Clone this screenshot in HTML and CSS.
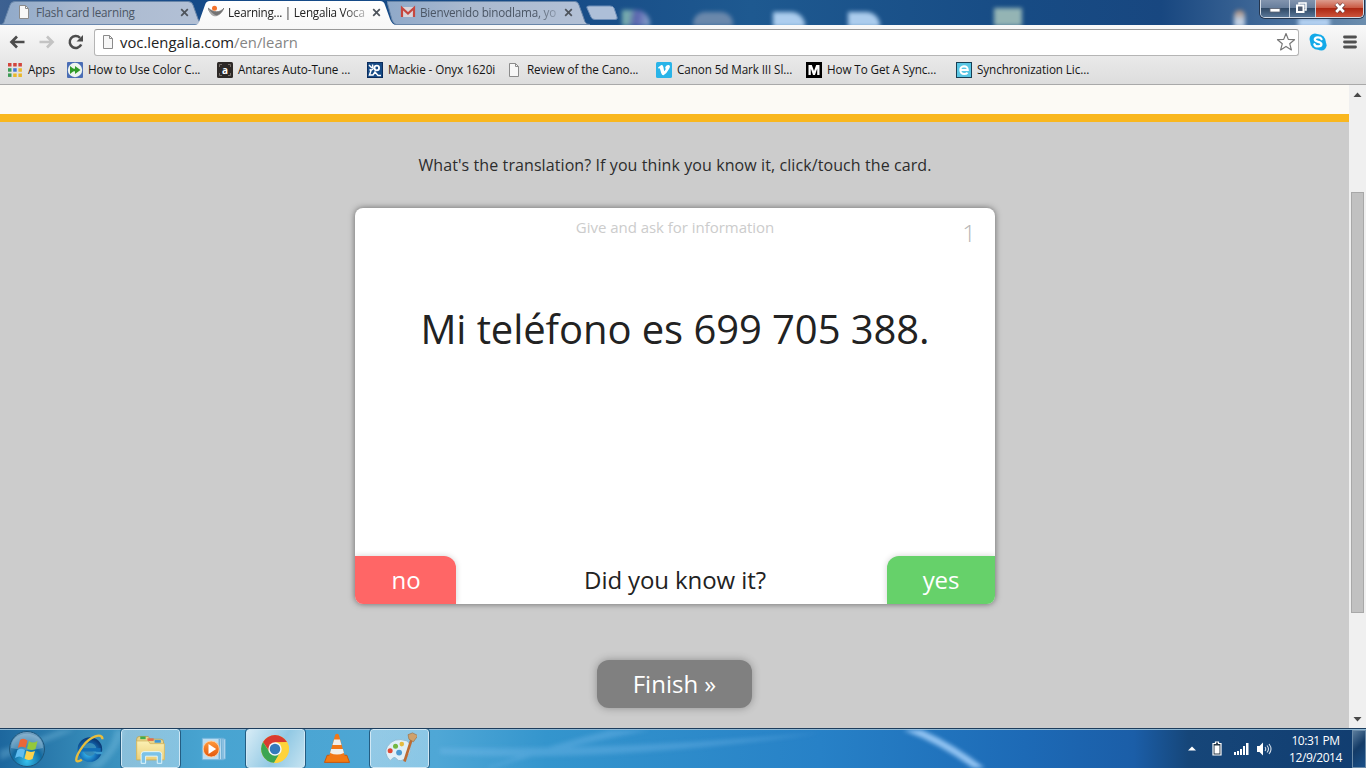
FILE: index.html
```html
<!DOCTYPE html>
<html lang="en">
<head>
<meta charset="utf-8">
<title>Learning... | Lengalia Vocabulary</title>
<link rel="stylesheet" href="styles.css">
</head>
<body>
<svg class="defs" width="0" height="0">
  <defs>
    <linearGradient id="tabIdle" x1="0" x2="1" y1="0" y2="0"><stop offset="0" stop-color="#8fa9c9"/><stop offset=".4" stop-color="#aab9cf"/><stop offset="1" stop-color="#b3c1d6"/></linearGradient>
    <linearGradient id="tabOn" x1="0" x2="0" y1="0" y2="1"><stop offset="0" stop-color="#fff"/><stop offset="1" stop-color="#f8f8f8"/></linearGradient>
    <linearGradient id="orange" x1="0" x2="0" y1="0" y2="1"><stop offset="0" stop-color="#ff9a3c"/><stop offset="1" stop-color="#e2570c"/></linearGradient>
    <radialGradient id="orb" cx=".5" cy=".85" r=".85"><stop offset="0" stop-color="#35c1ee"/><stop offset=".5" stop-color="#12699f"/><stop offset="1" stop-color="#7ba5c4"/></radialGradient>
    <linearGradient id="folder" x1="0" x2="0" y1="0" y2="1"><stop offset="0" stop-color="#fbf0b4"/><stop offset="1" stop-color="#ecd079"/></linearGradient>
    <radialGradient id="ie" cx=".4" cy=".7" r=".8"><stop offset="0" stop-color="#3fc4f4"/><stop offset=".6" stop-color="#1169b4"/><stop offset="1" stop-color="#0b3c78"/></radialGradient>
    <symbol id="doc" viewBox="0 0 16 16"><path d="M3.500 1.500h6l3 3v10h-9z" fill="#f7f7f7" stroke="#8b8b8b"/><path d="M9.500 1.500v3h3" fill="none" stroke="#8b8b8b"/></symbol>
    <symbol id="close" viewBox="0 0 9 9"><path d="M1.200 1.200l6.600 6.600M7.800 1.200L1.200 7.800" stroke="#4d535b" stroke-width="1.700"/></symbol>
  </defs>
</svg>
<div class="window">
  <header class="frame">
    <div class="desktop-blur"><i class="b1"></i><i class="b2"></i><i class="b3"></i><i class="b4"></i><i class="b5"></i><i class="b6"></i><i class="b7"></i></div>
    <div class="tab">
      <svg class="tab-shape" viewBox="0 0 206 25"><path d="M0 24.500C4 24.500 4 22 5 19L10 5Q11 1.500 15 1.500H188Q192 1.500 193 5L198 19Q200 24.500 205 24.500" fill="url(#tabIdle)" stroke="#6885a8"/></svg>
      <svg class="fav" viewBox="0 0 16 16"><use href="#doc"/></svg>
      <span class="tab-title">Flash card learning</span>
      <svg class="tab-close"><use href="#close"/></svg>
    </div>
    <div class="tab active">
      <svg class="tab-shape" viewBox="0 0 206 25"><path d="M0 25C4 24.500 4 22 5 19L10 5Q11 1 15 1H185Q189 1 190 5L195 19Q197 24.500 201 25" fill="url(#tabOn)"/></svg>
      <svg class="fav" viewBox="0 0 16 16"><path d="M0 4C3 13 11 15 16 4C12 9 6 9 0 4z" fill="#737373" stroke="#737373" stroke-width=".8"/><path d="M0 4C2 11 5 13 9 12C5 10 3 8 0 4z" fill="#a7a7a7"/><circle cx="6.500" cy="4.300" r="2.500" fill="#f4732c"/></svg>
      <span class="tab-title">Learning... | Lengalia Voca</span>
      <svg class="tab-close"><use href="#close"/></svg>
    </div>
    <div class="tab gmail">
      <svg class="tab-shape" viewBox="0 0 206 25"><path d="M0 1.500H188Q191 1.500 192 5L197 19Q198 24.500 203 24.500H9Q6 23 5 20z" fill="url(#tabIdle)" stroke="#6885a8"/></svg>
      <svg class="fav" viewBox="0 0 16 16"><rect x="1.500" y="3" width="13" height="10" fill="#d9d5db"/><path d="M2 13V4l6 5.500L14 4v9" fill="none" stroke="#c6473f" stroke-width="2.200"/></svg>
      <span class="tab-title">Bienvenido binodlama, yo</span>
      <svg class="tab-close"><use href="#close"/></svg>
    </div>
    <svg class="newtab" viewBox="0 0 34 16"><path d="M2 3Q1 1 4 1H25Q28 1 29 3L32 12Q33 14.500 30 14.500H10Q7 14.500 6 12z" fill="#adbfd8" stroke="#6f8fb8"/></svg>
    <div class="controls">
      <div class="ctl min"><svg viewBox="0 0 14 12"><rect x="2" y="6.500" width="10" height="3.500" fill="#fff" stroke="#5b6270" stroke-width=".8"/></svg></div>
      <div class="ctl max"><svg viewBox="0 0 14 12"><path d="M5 2.500V1h7v7h-1.500" fill="none" stroke="#fff" stroke-width="1.500"/><rect x="3" y="3.500" width="6.500" height="6.500" fill="#4f5b70" stroke="#fff" stroke-width="2"/></svg></div>
      <div class="ctl shut"><svg viewBox="0 0 14 12"><path d="M3 2l8 8M11 2L3 10" stroke="#6b3b38" stroke-width="4.200"/><path d="M3.200 2l7.600 8M10.800 2L3.200 10" stroke="#fff" stroke-width="2.700"/></svg></div>
    </div>
  </header>
  <nav class="toolbar">
    <svg class="back" viewBox="0 0 16 16"><path d="M15.500 8H3M8 2.500L2.500 8L8 13.500" fill="none" stroke="#4c4c4c" stroke-width="2.700"/></svg>
    <svg class="forward" viewBox="0 0 16 16"><path d="M.5 8H13M8 2.500L13.500 8L8 13.500" fill="none" stroke="#c3c3c3" stroke-width="2.700"/></svg>
    <svg class="reload" viewBox="0 0 16 16"><path d="M13.200 10.500A6 6 0 1 1 12 3.800" fill="none" stroke="#4c4c4c" stroke-width="2.500"/><path d="M15 1v6.500H8.500z" fill="#4c4c4c"/></svg>
    <div class="omnibox">
      <svg class="fav" viewBox="0 0 16 16"><use href="#doc"/></svg>
      <span class="url">voc.lengalia.com<span class="path">/en/learn</span></span>
      <svg class="star" viewBox="0 0 20 20"><path d="M10 1.500l2.300 5.900 6.200.3-4.800 4 1.700 6.200L10 14.400l-5.400 3.500 1.700-6.200-4.800-4 6.200-.3z" fill="#fff" stroke="#777" stroke-width="1.200" stroke-linejoin="round"/></svg>
    </div>
    <svg class="skype" viewBox="0 0 18 18"><circle cx="6" cy="6" r="5.500" fill="#13a9e8"/><circle cx="12.300" cy="12.300" r="5.300" fill="#13a9e8"/><circle cx="9" cy="9" r="7.800" fill="#13a9e8"/><path d="M12.500 6.100C11.500 3.800 5.800 3.800 5.800 6.600C5.800 9.500 12.400 8.200 12.400 11.200C12.400 14 6.200 14 5.400 11.300" fill="none" stroke="#fff" stroke-width="2.300" stroke-linecap="round"/></svg>
    <svg class="menu" viewBox="0 0 14 14"><path d="M1.500 2h11M1.500 7h11M1.500 12h11" stroke="#505050" stroke-width="2.800" stroke-linecap="round"/></svg>
  </nav>
  <nav class="bookmarks">
    <a class="bm apps"><svg viewBox="0 0 16 16"><path d="M1 1h3.500v3.500H1zM6.200 1h3.500v3.500H6.200zM11.400 1h3.500v3.500h-3.500z" fill="#d2453c"/><path d="M1 6.200h3.500v3.500H1z" fill="#3d9b55"/><path d="M6.200 6.200h3.500v3.500H6.200z" fill="#4274d3"/><path d="M11.400 6.200h3.500v3.500h-3.500zM6.200 11.400h3.500v3.500H6.200zM11.400 11.400h3.500v3.500h-3.500z" fill="#e9b82b"/><path d="M1 11.400h3.500v3.500H1z" fill="#3d9b55"/></svg><span>Apps</span></a>
    <a class="bm"><svg viewBox="0 0 16 16"><rect width="16" height="16" rx="1" fill="#4a6db5"/><circle cx="8" cy="8" r="7.200" fill="#eef5ee"/><path d="M3 4l5 4-5 4zM8 4l5.500 4L8 12z" fill="#319b28"/><path d="M3 6.700h6v2.600H3z" fill="#319b28"/></svg><span>How to Use Color C...</span></a>
    <a class="bm"><svg viewBox="0 0 16 16"><rect width="16" height="16" rx="1.500" fill="#2d2927"/><path d="M2.500 5V2.500H5M11 2.500h2.500V5M2.500 11v2.500H5M11 13.500h2.500V11" fill="none" stroke="#77706b"/><text x="8" y="11.500" class="glyph-a">a</text></svg><span>Antares Auto-Tune ...</span></a>
    <a class="bm mackie"><svg viewBox="0 0 16 16"><rect width="16" height="16" fill="#164a85" stroke="#0b2c5c" stroke-width="2"/><path d="M2 3l3 3M2.500 7.500Q5 9 6.500 6M4 8.500L2.500 13H6L8 10l3 3.500h3M6 6L5.500 2.500" fill="none" stroke="#fff" stroke-width="1.500"/><circle cx="9.800" cy="6" r="2.300" fill="none" stroke="#fff" stroke-width="1.800"/></svg><span>Mackie - Onyx 1620i</span></a>
    <a class="bm"><svg viewBox="0 0 16 16"><use href="#doc"/></svg><span>Review of the Cano...</span></a>
    <a class="bm"><svg viewBox="0 0 16 16"><rect width="16" height="16" rx="1.500" fill="#29b4e8"/><path d="M2 5.500L5.300 3Q7 2.700 7.400 5L8.200 9.300Q11 6 9 6.200Q10 2.700 12.700 3Q15 3.600 13 7Q11 11 7.500 13.300Q6 13.600 5.200 11L3.800 6.300L2.800 6.700z" fill="#fff"/></svg><span>Canon 5d Mark III Sl...</span></a>
    <a class="bm"><svg viewBox="0 0 16 16"><rect width="16" height="16" fill="#000"/><path d="M2.500 13V3h3.300L8 9l2.200-6h3.300v10h-2.300V6.500L9 13H7L4.800 6.500V13z" fill="#fff"/></svg><span>How To Get A Sync...</span></a>
    <a class="bm"><svg viewBox="0 0 16 16"><rect width="16" height="16" fill="#173f54"/><rect x="1" y="1" width="14" height="14" fill="#58c6e4"/><path d="M4.500 8h7.300Q11.600 4.200 8 4.200Q4.300 4.500 4.300 8Q4.500 12 8.200 12Q10.300 12 11.600 10.700" fill="none" stroke="#fff" stroke-width="2"/></svg><span>Synchronization Lic...</span></a>
  </nav>
  <main class="viewport">
    <div class="page">
      <div class="site-head"></div>
      <section class="learn">
        <p class="prompt">What's the translation? If you think you know it, click/touch the card.</p>
        <article class="card">
          <div class="card-head"><span class="topic">Give and ask for information</span><span class="count">1</span></div>
          <h1 class="phrase">Mi teléfono es 699 705 388.</h1>
          <div class="answer"><button class="no">no</button><span class="question">Did you know it?</span><button class="yes">yes</button></div>
        </article>
        <button class="finish">Finish »</button>
      </section>
    </div>
    <aside class="scrollbar"><svg viewBox="0 0 9 5"><path d="M.5 5L4.500.5L8.500 5z" fill="#4a4a4a"/></svg><div class="thumb"></div><svg viewBox="0 0 9 5"><path d="M.5 0L4.500 4.500L8.500 0z" fill="#4a4a4a"/></svg></aside>
  </main>
  <footer class="taskbar">
    <svg class="streaks" viewBox="0 0 1366 38" preserveAspectRatio="none">
      <path d="M0 30Q40 15 75 0H60Q20 15 0 20zM100 38Q120 20 125 0H115Q110 25 85 38z" fill="#8acbe9" opacity=".3"/>
      <path d="M490 38Q570 15 650 0H610Q550 15 485 38zM440 24Q600 34 820 3Q620 20 440 18z" fill="#84c2ef" opacity=".32"/>
      <path d="M905 -3Q946 12 984 42" fill="none" stroke="#a0cdf8" stroke-width="7" opacity=".9"/>
    </svg>
    <div class="tasks">
      <div class="task start"><svg viewBox="0 0 38 38"><circle cx="19" cy="19" r="17.500" fill="url(#orb)" stroke="#1d567c"/><path d="M3 18C3-1 35-1 35 18Q20 22 3 18z" fill="#d5e8f3" opacity=".28"/><path d="M12 10Q15.500 7.500 19.500 10.500L17.500 18Q14 15.500 9.800 18z" fill="#ec6638"/><path d="M21 11Q25 14 29.500 11L27.500 19Q23 21 19 18.500z" fill="#94c83c"/><path d="M9.400 20Q13 17.500 17 20L15 28Q11.500 25 7 28z" fill="#60bdf0"/><path d="M18.500 20.500Q22 23 27 21L24.500 29Q20 31 16.500 28.500z" fill="#fdd34c"/></svg></div>
      <div class="task"><svg viewBox="0 0 38 38"><circle cx="20" cy="19.500" r="10.500" fill="none" stroke="url(#ie)" stroke-width="6.500"/><path d="M10 18h22v3.800H10z" fill="#126eb6"/><path d="M23 22h11v3h-6z" fill="#3b9bd0"/><path d="M34 8C34 0 20 5 12 16C2 30 3 36 11 31" fill="none" stroke="#e8be3e" stroke-width="2.600"/></svg></div>
      <div class="task open"><svg viewBox="0 0 38 38"><path d="M3 8q0-3 3-3h10l2 3h12q3 0 3 3v20H3z" fill="#e9d58b" stroke="#b9a45d"/><path d="M7 5h6v3H7z" fill="#40ac4d"/><path d="M15 7h7v3h-7z" fill="#e46d4b"/><path d="M23 9h7v3h-7z" fill="#4097d4"/><path d="M3 10h13l2 3h16v18H3z" fill="url(#folder)" stroke="#d6ba63"/><path d="M8 35V25q0-3 3-3h17q3 0 3 3v10h-5v-8H13v8z" fill="#7cc3e8" stroke="#e9faff"/></svg></div>
      <div class="task"><svg viewBox="0 0 38 38"><path d="M7 7h24v24H7zM28 7l5 1v22l-4 1z" fill="#bcddf1" stroke="#6eb1da"/><path d="M26 7.500v23M29 7.500v23" stroke="#70aed4" stroke-width="1.500"/><circle cx="17" cy="19" r="9" fill="url(#orange)" stroke="#ffd3a8"/><path d="M14 13.500l8.500 5.500-8.500 5.500z" fill="#fff"/></svg></div>
      <div class="task open focus"><svg viewBox="0 0 38 38"><circle cx="19" cy="19" r="15.500" fill="#ffd33b"/><path d="M5.600 11.200A15.500 15.500 0 0 1 32.400 11.200L19 12L13 22z" fill="#d93a30"/><path d="M5.600 11.200A15.500 15.500 0 0 0 18 34.500L25 22.500H13z" fill="#3ba552"/><path d="M19 11.500h13.600A15.500 15.500 0 0 1 18 34.500l7-12z" fill="#ffd33b"/><circle cx="19" cy="19" r="7.500" fill="#f5f7f9"/><circle cx="19" cy="19" r="5.900" fill="#337abc"/></svg></div>
      <div class="task"><svg viewBox="0 0 38 38"><path d="M8 26h22l3 8H5z" fill="#f27a12" stroke="#c75307"/><path d="M17 3q2-2 4 0l7 25q-9 5-18 0z" fill="#f27817"/><path d="M15.800 8.500h6.500l1.700 6H14zM12.500 19h13l1.300 4.500Q19 27 11.300 23.500z" fill="#f1f0ed"/></svg></div>
      <div class="task open"><svg viewBox="0 0 38 38"><path d="M8 32Q0 24 5 16Q12 5 27 10Q35 17 27 28Q19 35 15 30Q13 26 8 32z" fill="#e0f0f8" stroke="#8dbad3"/><circle cx="8" cy="21" r="2.800" fill="#e04a35"/><circle cx="14" cy="16" r="2.800" fill="#73b842"/><circle cx="21" cy="13.500" r="2.600" fill="#e4bb40"/><circle cx="18" cy="23" r="3.300" fill="#4c9bd1"/><path d="M32 8L24 33" stroke="#bd6b32" stroke-width="3"/><path d="M29 8l-1-5 5-2 6 3-5 7z" fill="#cfa16b" stroke="#9b6b3c" stroke-width=".7"/></svg></div>
    </div>
    <div class="tray">
      <svg class="up" viewBox="0 0 8 5"><path d="M0 4.500L4 .5L8 4.500z" fill="#fff"/></svg>
      <svg class="battery" viewBox="0 0 10 15"><path d="M1 2.500h2.500V1h3v1.500H9v11.500H1z" fill="#263746" stroke="#fff" stroke-width="1.200"/><path d="M2.500 4.500h5v8h-5z" fill="#fff"/></svg>
      <svg class="signal" viewBox="0 0 15 12"><path d="M0 9h2v3H0zM3 8h2v4H3zM6 6h2v6H6zM9 3h2v9H9zM12 0h2.500v12H12z" fill="#fff"/></svg>
      <svg class="volume" viewBox="0 0 15 14"><path d="M0 4h2.500L6 .5v13L2.500 10H0z" fill="#fff"/><path d="M8 5q1.500 2 0 4M10 3.500q3 3.500 0 7M12 2q4 5 0 10" fill="none" stroke="#d5dfea" stroke-width="1.100"/></svg>
      <div class="clock"><span>10:31 PM</span><span>12/9/2014</span></div>
      <div class="show-desktop"></div>
    </div>
  </footer>
</div>
</body>
</html>
```
FILE: styles.css
```css
* { box-sizing: border-box; }
body { margin: 0; font-family: "Open Sans", "Noto Sans", sans-serif; overflow: hidden; }
.defs { position: absolute; }
svg { display: block; flex: none; }
button { border: 0; padding: 0; margin: 0; font: inherit; letter-spacing: inherit; color: inherit; }
.window { width: 1366px; height: 768px; display: flex; flex-direction: column; }

/* Window frame and tabs */
.frame { position: relative; height: 25px; display: flex; background: linear-gradient(90deg, #3d6191, #154a88 14%, #174b86 40%, #1e5990 55%, #174b84 75%, #184780 85%, #486f9c 94%, #6c8eae); overflow: hidden; font-size: 11.7px; }
.desktop-blur i { position: absolute; filter: blur(2px); opacity: .85; }
.b1 { left: 622px; top: 10px; width: 28px; height: 16px; background: linear-gradient(100deg, #86b9b4 25%, #6464b4 50%, #9fb8d8); border-radius: 0 14px 0 0; }
.b2 { left: 693px; top: 12px; width: 40px; height: 14px; background: #7891b1; border-radius: 12px 12px 0 0; }
.b3 { left: 773px; top: 12px; width: 32px; height: 15px; background: #c5e2ff; border-radius: 0 14px 0 0; }
.b4 { left: 848px; top: 12px; width: 32px; height: 15px; background: #c5e2ff; border-radius: 0 14px 0 0; }
.b5 { left: 994px; top: 8px; width: 28px; height: 18px; background: #aac7bd; }
.b6 { left: 1234px; top: 10px; width: 11px; height: 17px; background: linear-gradient(#b98a6a, #d9e4f2 60%); border-radius: 6px 6px 0 0; }
.b7 { left: 1298px; top: 18px; width: 32px; height: 9px; background: #c4e0ff; }
.tab { position: relative; width: 195px; height: 25px; padding: 0 6px 1px 16px; display: flex; align-items: center; color: #4b5665; flex: none; }
.tab-shape { position: absolute; left: 0; top: 0; width: 206px; height: 25px; }
.tab.active { z-index: 2; width: 192px; padding-left: 13px; padding-right: 6px; color: #222; }
.tab.gmail { z-index: 1; width: 198px; padding-left: 13px; padding-right: 12px; }
.fav { position: relative; width: 16px; height: 16px; margin-right: 4px; }
.tab-title { position: relative; flex: 1; white-space: nowrap; letter-spacing: -.21px; }
.active .tab-title, .gmail .tab-title { -webkit-mask-image: linear-gradient(90deg, #000 84%, rgba(0,0,0,.3)); mask-image: linear-gradient(90deg, #000 84%, rgba(0,0,0,.3)); }
.active .tab-title { letter-spacing: -.25px; }
.tab-close { position: relative; width: 9px; height: 9px; margin-left: 7px; }
.newtab { width: 34px; height: 16px; margin-top: 5px; }
.controls { margin-left: auto; margin-right: 2px; height: 18px; width: 104px; display: flex; border: 1px solid #d4dce7; border-top: 0; border-radius: 0 0 5px 5px; box-shadow: 0 0 0 1px #24354d; overflow: hidden; position: relative; }
.ctl { display: flex; justify-content: center; align-items: center; background: linear-gradient(#8294ae, #687e9c 45%, #304966 50%, #587697); border-right: 1px solid #c4cfdd; }
.ctl svg { width: 14px; height: 12px; margin-bottom: 1px; }
.min { width: 29px; }
.max { width: 26px; padding-right: 3px; }
.shut { flex: 1; border: 0; background: linear-gradient(#dc9c8d, #ca5b45 45%, #ad2813 50%, #cb543b); }

/* Navigation row */
.toolbar { height: 32px; background: linear-gradient(#f9f9f9, #e9e9e9); display: flex; align-items: center; padding: 2px 9px 0 9px; }
.back, .forward, .reload { width: 16px; height: 16px; }
.forward { margin-left: 14px; }
.reload { margin-left: 13px; }
.omnibox { margin-left: 10px; width: 1206px; height: 27px; border: 1px solid #b5b5b5; border-top-color: #999; border-radius: 3px; background: #fff; display: flex; align-items: center; padding: 0 2px 0 5px; }
.url { font-size: 14.8px; color: #222; letter-spacing: .01px; line-height: 24px; }
.path { color: #858585; }
.star { width: 20px; height: 20px; margin-left: auto; }
.skype { width: 18px; height: 18px; margin-left: 10px; }
.menu { width: 14px; height: 14px; margin-left: 16px; }

/* Bookmarks */
.bookmarks { height: 28px; background: linear-gradient(#e9e9e9, #ddd); border-bottom: 1px solid #a9a9a9; display: flex; align-items: center; padding: 0 0 2px 7px; font-size: 11.7px; color: #151515; letter-spacing: -.1px; }
.bm { width: 150px; display: flex; align-items: center; gap: 5px; white-space: nowrap; flex: none; }
.bm svg { width: 16px; height: 16px; }
.bm span { padding-bottom: 1px; }
.bm.apps { width: 60px; }
.bm.mackie { width: 139px; }
.glyph-a { font: bold 10px "Open Sans", sans-serif; fill: #fff; text-anchor: middle; letter-spacing: 0; }

/* Page */
.viewport { height: 643px; display: flex; }
.page { width: 1349px; background: #ccc; }
.site-head { height: 37px; background: #fcfaf5; border-bottom: 8px solid #f9b71e; }
.learn { display: flex; flex-direction: column; align-items: center; color: #222; padding-left: 1px; }
.prompt { margin: 31px 0 0; height: 55px; font-size: 16px; line-height: 24px; letter-spacing: .09px; color: #2c2c2c; }
.card { width: 640px; height: 396px; background: #fff; border-radius: 8px; box-shadow: 0 0 6px rgba(0,0,0,.5); display: flex; flex-direction: column; overflow: hidden; }
.card-head { display: grid; grid-template-columns: 80px 1fr 80px; height: 90px; padding-top: 8px; color: #ccc; }
.topic { grid-column: 2; text-align: center; font-size: 15px; line-height: 22px; letter-spacing: -.03px; }
.count { text-align: right; padding-right: 19px; font-size: 24px; line-height: 33px; font-weight: 300; color: #b6b6b6; }
.phrase { margin: 0; text-align: center; font-size: 40px; font-weight: 400; line-height: 62px; white-space: nowrap; letter-spacing: -.08px; }
.answer { margin-top: auto; height: 48px; display: flex; justify-content: space-between; font-size: 24px; line-height: 48px; letter-spacing: -.1px; position: relative; }
.question { position: absolute; left: 0; right: 0; text-align: center; pointer-events: none; }
.no, .yes { color: #fff; box-shadow: 0 0 6px rgba(0,0,0,.18); }
.no { width: 101px; padding-left: 1px; background: #f66; border-radius: 0 12px 0 0; }
.yes { width: 108px; background: #66d16a; border-radius: 12px 0 0 0; }
.finish { width: 155px; height: 48px; margin-top: 56px; margin-right: 1px; padding-bottom: 1px; background: #808080; color: #fff; font-size: 24px; border-radius: 12px; box-shadow: 0 0 8px rgba(0,0,0,.3); }
.scrollbar { width: 17px; background: #f0f0f0; display: flex; flex-direction: column; align-items: center; padding: 7px 0 6px; }
.scrollbar svg { width: 9px; height: 5px; }
.thumb { width: 13px; height: 421px; margin-top: 95px; margin-bottom: auto; background: #c1c1c1; border: 1px solid #a8a8a8; }

/* Taskbar */
.taskbar { position: relative; height: 40px; border-top: 1px solid #1d3d5d; box-shadow: inset 0 1px #8fb8d4; background: linear-gradient(90deg, #1d679e, #378dba 7%, #48a4d1 15%, #4fa7d6 32%, #3495cd 40%, #2781c7 60%, #1d6ab6 75%, #1b5ea8 83%, #164679 87%, #113d70); display: flex; overflow: hidden; }
.streaks { position: absolute; left: 0; top: 1px; width: 1366px; height: 38px; filter: blur(2px); }
.tasks { position: relative; display: flex; gap: 3px; }
.task { width: 59px; height: 39px; display: flex; align-items: center; justify-content: center; }
.task + .task { margin-left: .2px; }
.task svg { width: 34px; height: 34px; }
.task.start { width: 56px; padding-right: 2px; }
.start svg { width: 38px; height: 38px; }
.open { border: 1px solid #d0e8f5; outline: 1px solid #245d82; border-radius: 3px; background: linear-gradient(120deg, rgba(255,255,255,.4), rgba(185,224,242,.55)); }
.focus { background: linear-gradient(120deg, #d7ecf6, #92c9e4 55%, #c5e3f1); }
.tray { position: relative; margin-left: auto; display: flex; align-items: center; color: #fff; font-size: 12px; }
.up { width: 8px; height: 5px; margin-right: 16px; }
.battery { width: 10px; height: 15px; margin-right: 12px; }
.signal { width: 15px; height: 12px; margin-right: 8px; }
.volume { width: 15px; height: 14px; }
.clock { width: 77px; margin-left: 3px; display: flex; flex-direction: column; text-align: center; line-height: 17px; letter-spacing: -.45px; padding: 1px 0 0 4px; }
.show-desktop { width: 14px; height: 38px; border: 1px solid #6b8ba9; background: linear-gradient(135deg, #5b7c9c, #143b67 45%, #1a5089); }
```
